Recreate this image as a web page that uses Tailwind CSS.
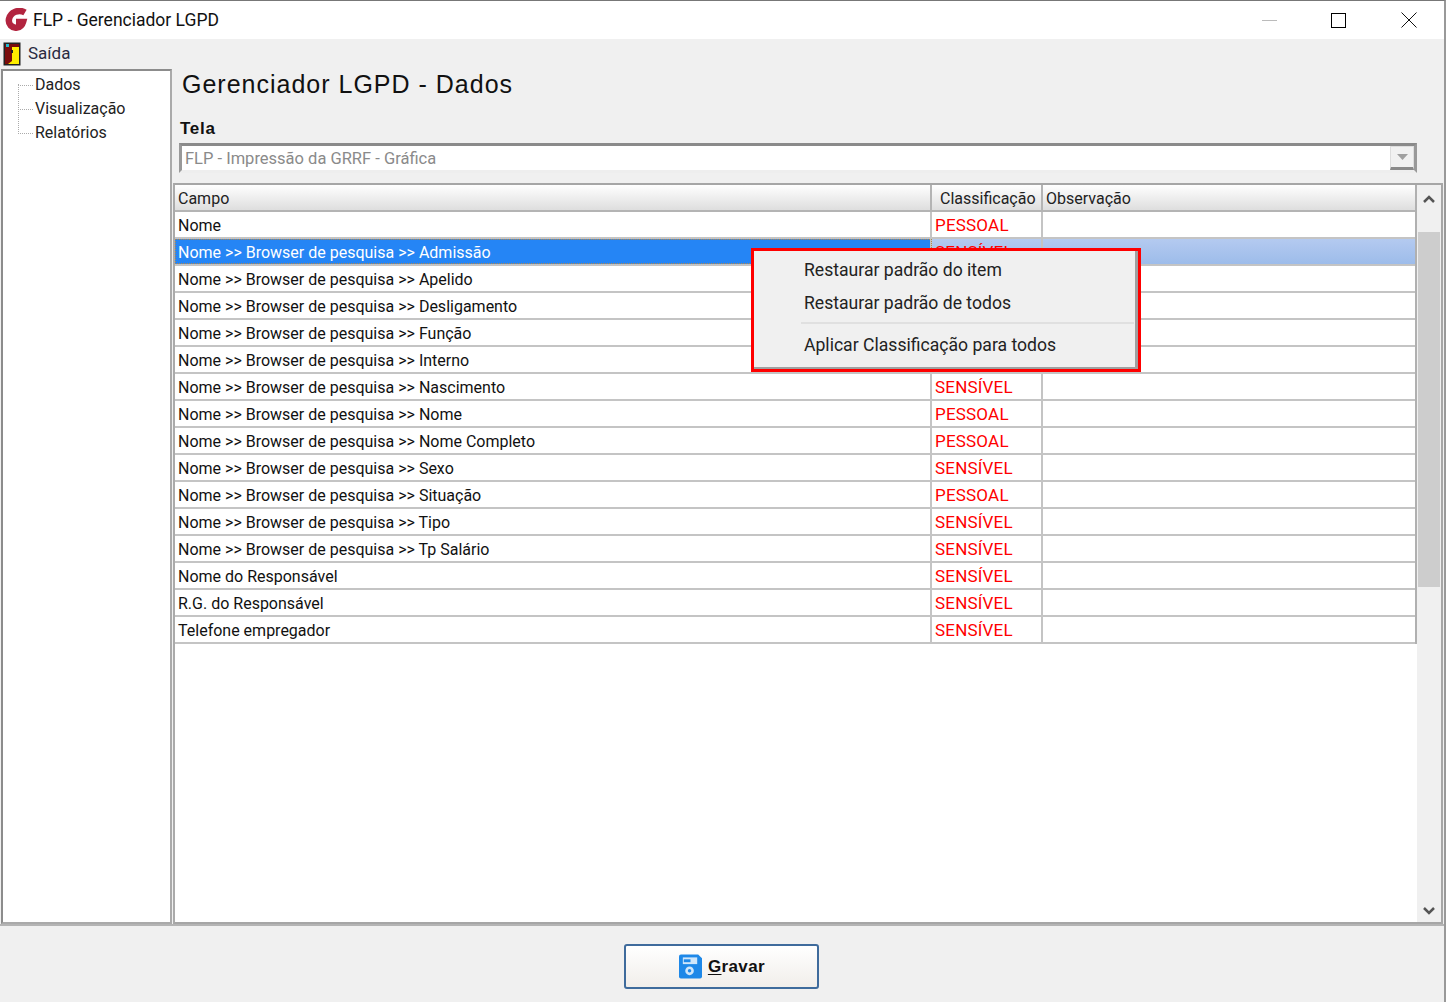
<!DOCTYPE html>
<html lang="pt-BR">
<head>
    <meta charset="UTF-8">
    <title>FLP - Gerenciador LGPD</title>
    <script src="https://cdn.jsdelivr.net/npm/@tailwindcss/browser@4"></script>
</head>
<body class="bg-[#f0f0f0] font-['Roboto',sans-serif] text-[#111] overflow-hidden">
<div class="relative w-[1446px] h-[1002px] flex flex-col border-t border-[#777] border-r-2 border-r-[#999]">

    <!-- Title bar -->
    <header class="h-[38px] bg-white flex items-center shrink-0">
        <svg class="ml-[4px] w-[25px] h-[25px]" viewBox="0 0 25 25">
            <path d="M21 4.500C15 1 6.500 4 5 11c-1 5 3 9.500 8 8.500 3-.5 5-2 6-5.500h-7" fill="none" stroke="#b2243f" stroke-width="6.500"/>
        </svg>
        <span class="ml-[4px] text-[17.5px] text-[#111]">FLP - Gerenciador LGPD</span>
        <div class="ml-auto flex items-center h-full">
            <div class="w-[15px] h-px bg-[#bbb] mr-[54px]"></div>
            <div class="w-[15px] h-[15px] border-[1.5px] border-black mr-[55px]"></div>
            <svg class="w-[16px] h-[16px] mr-[27px]" viewBox="0 0 16 16"><path d="M.5.500l15 15M15.500.500l-15 15" stroke="#111" fill="none"/></svg>
        </div>
    </header>

    <!-- Menu -->
    <nav class="h-[30px] flex items-center shrink-0 pl-[3px]">
        <svg class="w-[18px] h-[24px]" viewBox="0 0 18 24">
            <rect x=".5" y=".5" width="17" height="23" fill="#222"/>
            <rect x="2" y="2" width="14" height="20" fill="#7a0c0c"/>
            <path d="M9 5h7v17H5l4-3Z" fill="#ffee00"/>
            <rect x="3" y="2" width="3" height="3" fill="#22bcd0"/>
            <rect x="8" y="8" width="2" height="3" fill="#222"/>
        </svg>
        <span class="ml-[7px] text-[17px] text-[#2a2a40]">Saída</span>
    </nav>

    <div class="flex flex-1 min-h-0 pl-px">
        <!-- Tree -->
        <aside class="relative w-[171px] h-[855px] bg-white border-2 border-[#8c8c8c] border-r-[#aaa] border-b-[#aaa] pt-[2px] shrink-0">
            <div class="absolute left-[15px] top-[13px] h-[48px] border-l border-dotted border-[#aaa]"></div>
            <div class="flex items-center h-[24px]"><span class="ml-[15px] w-[15px] border-t border-dotted border-[#aaa]"></span><span class="ml-[2px] text-[16px] text-[#222]">Dados</span></div>
            <div class="flex items-center h-[24px]"><span class="ml-[15px] w-[15px] border-t border-dotted border-[#aaa]"></span><span class="ml-[2px] text-[16px] text-[#222]">Visualização</span></div>
            <div class="flex items-center h-[24px]"><span class="ml-[15px] w-[15px] border-t border-dotted border-[#aaa]"></span><span class="ml-[2px] text-[16px] text-[#222]">Relatórios</span></div>
        </aside>

        <main class="flex-1 min-w-0 flex flex-col">
            <h1 class="ml-[10px] mt-px h-[30px] flex items-center font-['Liberation_Sans',sans-serif] text-[25px] leading-none tracking-[1px] text-[#111]">Gerenciador LGPD - Dados</h1>
            <div class="ml-[8px] mt-[20px] h-[19px] flex items-center font-['Liberation_Sans',sans-serif] text-[17px] font-bold tracking-[0.7px] text-[#111]">Tela</div>

            <!-- Combo -->
            <div class="ml-[7px] mt-[5px] w-[1238px] h-[30px] bg-white border-[3px] border-[#8a8a8a] border-r-[#999] border-b-[#eee] border-l-[#999] flex items-center shrink-0">
                <span class="ml-[3px] mt-[3px] text-[16.5px] text-[#8a8a8a]">FLP - Impressão da GRRF - Gráfica</span>
                <div class="ml-auto w-[24px] h-[24px] bg-[#f1f1f1] border border-[#ddd] border-b-[3px] border-b-[#8a8a8a] flex items-center justify-center">
                    <svg class="w-[11px] h-[6px]" viewBox="0 0 11 6"><path d="M0 0h11L5.500 6Z" fill="#a0a0a0"/></svg>
                </div>
            </div>

            <!-- Grid -->
            <div class="mt-[10px] ml-px w-[1270px] h-[741px] flex border-2 border-[#a6a6a6] border-l-[#aaa] bg-white shrink-0">
                <div class="w-[1242px] shrink-0">
                    <div id="grid" class="border-r-2 border-[#b0b0b0]">
                        <div class="flex h-[27px] border-b-2 border-[#b4b4b4] text-[16px] text-[#222] bg-gradient-to-b from-white to-[#dedede]">
                            <div class="w-[757px] pl-[3px] pt-[2px] flex items-center border-r-2 border-[#b4b4b4]">Campo</div>
                            <div class="w-[111px] pl-[8px] pt-[2px] flex items-center border-r-2 border-[#b4b4b4]">Classificação</div>
                            <div class="flex-1 pl-[3px] pt-[2px] flex items-center">Observação</div>
                        </div>
                    </div>
                </div>
                <!-- Scrollbar -->
                <div class="flex-1 bg-[#f0f0f0] flex flex-col items-center">
                    <svg class="mt-[10px] w-[12px] h-[8px]" viewBox="0 0 12 8"><path d="M1 7l5-5 5 5" stroke="#555" stroke-width="2.500" fill="none"/></svg>
                    <div class="mt-[29px] w-[22px] h-[355px] bg-[#cdcdcd]"></div>
                    <svg class="mt-auto mb-[7px] w-[12px] h-[8px]" viewBox="0 0 12 8"><path d="M1 1l5 5 5-5" stroke="#555" stroke-width="2.500" fill="none"/></svg>
                </div>
            </div>
        </main>
    </div>

    <!-- Footer with save button -->
    <footer class="h-[78px] shrink-0 flex justify-center border-t-2 border-[#b4b4b4]">
        <button class="mt-[18px] ml-[-1px] w-[195px] h-[45px] rounded-[3px] border-2 border-[#3f6b9c] bg-gradient-to-b from-white to-[#f1eeea] flex items-center justify-center gap-[6px] pl-[1px] font-['Liberation_Sans',sans-serif] text-[17px] font-bold tracking-[0.4px] text-[#111]">
            <svg class="w-[23px] h-[25px]" viewBox="0 0 24 25">
                <path d="M2 0h18l4 4v19a2 2 0 0 1-2 2H2a2 2 0 0 1-2-2V2a2 2 0 0 1 2-2Z" fill="#1e88e8"/>
                <rect x="4" y="3" width="15" height="7" fill="#cfe6fa"/>
                <rect x="5" y="5" width="7" height="3" fill="#1e88e8"/>
                <circle cx="11" cy="17" r="4.500" fill="#cfe6fa"/>
                <circle cx="11" cy="17" r="1.800" fill="#1e88e8"/>
            </svg>
            <span><span class="underline underline-offset-2">G</span>ravar</span>
        </button>
    </footer>

    <!-- Context menu -->
    <div class="absolute left-[751px] top-[247px] w-[390px] h-[124px] border-[3px] border-[#f00] bg-[#f0f0f0] z-10">
        <div class="h-full border-r-[3px] border-b-[2px] border-[#a0a0a0] pt-[3px] text-[17.6px] text-[#222]">
            <div class="h-[33px] pl-[50px] flex items-center">Restaurar padrão do item</div>
            <div class="h-[33px] pl-[50px] flex items-center">Restaurar padrão de todos</div>
            <div class="ml-[47px] mr-[1px] mt-[2px] mb-[3px] border-t-2 border-[#e0e0e0]"></div>
            <div class="h-[36px] pl-[50px] flex items-center">Aplicar Classificação para todos</div>
        </div>
    </div>
</div>

<script>
    // the rows under the context menu show no classification in the picture
    const rows = [
        ["Nome", "PESSOAL"],
        ["Nome >> Browser de pesquisa >> Admissão", "SENSÍVEL"],
        ["Nome >> Browser de pesquisa >> Apelido", ""],
        ["Nome >> Browser de pesquisa >> Desligamento", ""],
        ["Nome >> Browser de pesquisa >> Função", ""],
        ["Nome >> Browser de pesquisa >> Interno", ""],
        ["Nome >> Browser de pesquisa >> Nascimento", "SENSÍVEL"],
        ["Nome >> Browser de pesquisa >> Nome", "PESSOAL"],
        ["Nome >> Browser de pesquisa >> Nome Completo", "PESSOAL"],
        ["Nome >> Browser de pesquisa >> Sexo", "SENSÍVEL"],
        ["Nome >> Browser de pesquisa >> Situação", "PESSOAL"],
        ["Nome >> Browser de pesquisa >> Tipo", "SENSÍVEL"],
        ["Nome >> Browser de pesquisa >> Tp Salário", "SENSÍVEL"],
        ["Nome do Responsável", "SENSÍVEL"],
        ["R.G. do Responsável", "SENSÍVEL"],
        ["Telefone empregador", "SENSÍVEL"],
    ];
    document.getElementById("grid").insertAdjacentHTML("beforeend", rows.map((r, i) => `
        <div class="flex h-[27px] border-b-2 border-[#c4c4c4] text-[16px] ${i == 1 ? "bg-gradient-to-b from-[#b4caf0] to-[#9dbcea]" : ""}">
            <div class="w-[757px] pl-[3px] pt-[2px] flex items-center border-r-2 border-[#c4c4c4] ${i == 1 ? "bg-[#2585f5] text-white outline-1 outline-dotted outline-[#b08850] -outline-offset-1" : "text-[#111]"}">${r[0]}</div>
            <div class="w-[111px] pl-[3px] pt-[2px] flex items-center border-r-2 border-[#c4c4c4] text-[17px] tracking-[0.2px] text-[#f00]">${r[1]}</div>
            <div class="flex-1"></div>
        </div>`).join(""));
</script>
</body>
</html>
